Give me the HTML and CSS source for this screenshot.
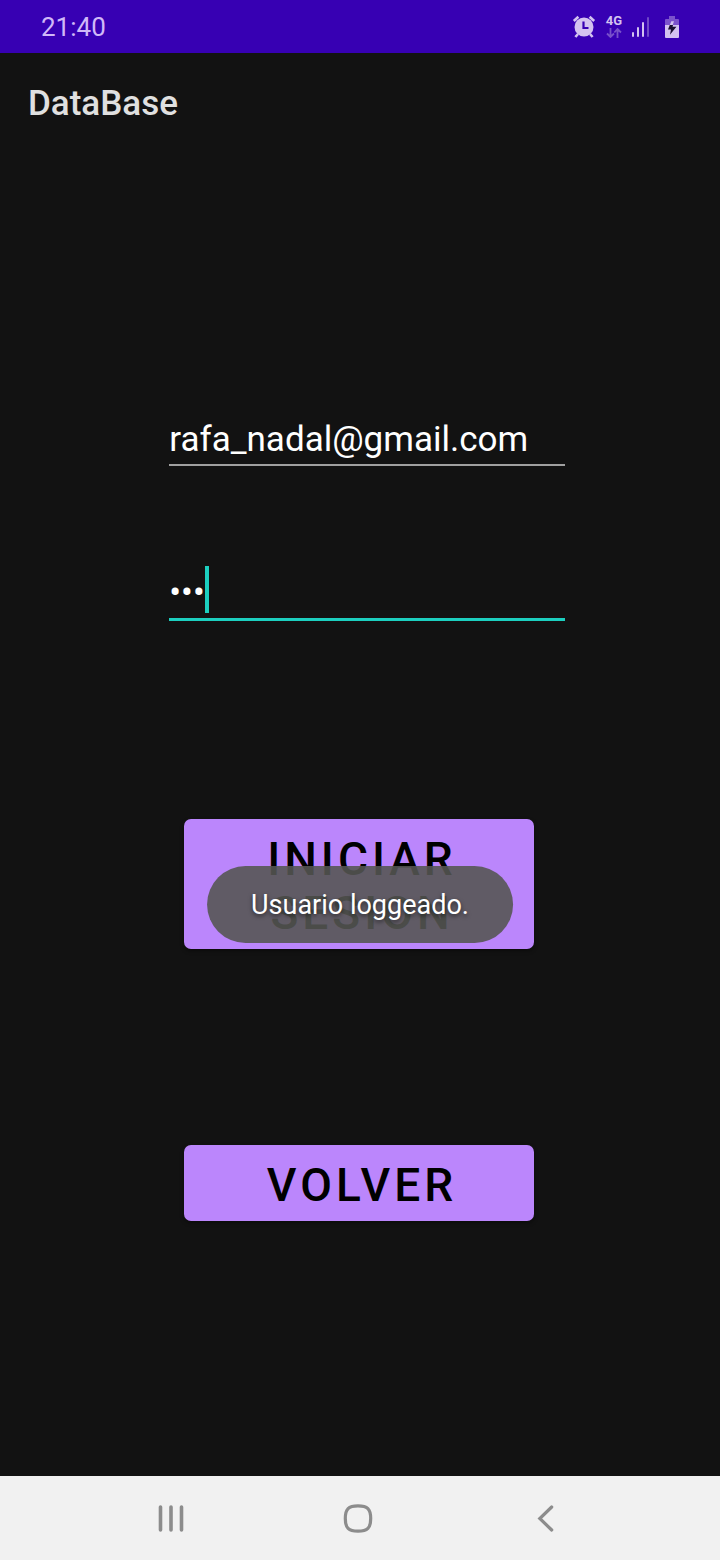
FILE: index.html
```html
<!DOCTYPE html>
<html lang="es">
<head>
<meta charset="utf-8">
<meta name="viewport" content="width=device-width, initial-scale=1">
<title>DataBase</title>
<link rel="stylesheet" href="styles.css">
</head>
<body>
<div class="screen">
  <div class="status-bar">
    <time class="clock">21:40</time>
    <div class="status-icons">
      <svg class="icon-alarm" width="24" height="24" viewBox="0 0 24 24" aria-hidden="true">
        <circle cx="12" cy="12" r="9.5" fill="#d3c2f0"/>
        <path d="M1.8 6 L6.4 1.8 M22.2 6 L17.6 1.8 M6 19 L3.4 22 M18 19 L20.6 22" stroke="#d3c2f0" stroke-width="2.6" fill="none"/>
        <path d="M11.5 6.5 V13 H16.5" stroke="#3700b3" stroke-width="2.2" fill="none"/>
      </svg>
      <div class="network">
        <span class="network-type">4G</span>
        <svg width="16" height="10" viewBox="0 0 16 10" aria-hidden="true">
          <path d="M4.5 0 V9 M1 5.5 L4.5 9 L8 5.5 M11.5 10 V1 M8.3 4.5 L11.5 1 L15 4.5" stroke="#7850ca" stroke-width="1.8" fill="none"/>
        </svg>
      </div>
      <svg class="icon-signal" width="20" height="21" viewBox="0 0 20 21" aria-hidden="true">
        <rect x="1" y="16" width="2" height="5" rx="1" fill="#d3c2f0"/>
        <rect x="6" y="11" width="2" height="10" rx="1" fill="#d3c2f0"/>
        <rect x="11" y="6" width="2" height="15" rx="1" fill="#d3c2f0"/>
        <rect x="16" y="1" width="2" height="20" rx="1" fill="#7048c8"/>
      </svg>
      <svg class="icon-battery" width="14" height="22" viewBox="0 0 14 22" aria-hidden="true">
        <path d="M4 0 H10 V3 H13 Q14 3 14 4 V9 H0 V4 Q0 3 1 3 H4 Z" fill="#7b52cc"/>
        <path d="M0 9 H14 V21 Q14 22 13 22 H1 Q0 22 0 21 Z" fill="#d3c2f0"/>
        <path d="M6.3 5.2 H9 L7.7 9 H4.8 Z" fill="#d3c2f0"/>
        <path d="M4.8 9 L3 13.4 H6 L5 18.8 L11.4 10.8 H7.6 L8 9 Z" fill="#1a1030"/>
      </svg>
    </div>
  </div>

  <header class="app-bar">
    <h1 class="app-title">DataBase</h1>
  </header>

  <main class="content">
    <form class="login">
      <div class="fields">
        <div class="field">
          <input class="input" type="email" aria-label="Email" value="rafa_nadal@gmail.com">
        </div>
        <div class="field">
          <input class="input input-active" type="password" aria-label="Contraseña" value="123">
          <span class="caret"></span>
        </div>
      </div>
      <div class="actions">
        <button class="button" type="button">INICIAR SESION</button>
        <button class="button" type="button">VOLVER</button>
      </div>
    </form>
  </main>

  <div class="toast" role="status">Usuario loggeado.</div>

  <nav class="nav-bar">
    <button class="nav-button" type="button" aria-label="Recientes">
      <svg width="30" height="30" viewBox="0 0 30 30"><path d="M4.5 4 V27 M15 4 V27 M25.5 4 V27" stroke="#8c8c8c" stroke-width="3.6" stroke-linecap="round"/></svg>
    </button>
    <button class="nav-button" type="button" aria-label="Inicio">
      <svg width="30" height="30" viewBox="0 0 30 30"><path d="M15 2.8 C24.5 2.8 27.7 6 27.7 15.5 C27.7 25 24.5 28.2 15 28.2 C5.5 28.2 2.3 25 2.3 15.5 C2.3 6 5.5 2.8 15 2.8 Z" fill="none" stroke="#8c8c8c" stroke-width="3.2"/></svg>
    </button>
    <button class="nav-button" type="button" aria-label="Atrás">
      <svg width="30" height="30" viewBox="0 0 30 30"><path d="M21.7 4 L9.8 15.5 L21.7 27" fill="none" stroke="#8c8c8c" stroke-width="3.2" stroke-linecap="round"/></svg>
    </button>
  </nav>
</div>
</body>
</html>
```

FILE: styles.css
```css
* {
  box-sizing: border-box;
}

body {
  margin: 0;
  background: #121212;
  font-family: Roboto, sans-serif;
}

.screen {
  position: relative;
  display: flex;
  flex-direction: column;
  min-height: 100vh;
}

.status-bar {
  display: flex;
  align-items: center;
  justify-content: space-between;
  height: 53px;
  padding: 0 41px;
  background: #3700b3;
  color: #d0b8f8;
}

.clock {
  font-size: 26px;
  line-height: 32px;
}

.status-icons {
  display: flex;
  align-items: center;
}

.icon-alarm {
  margin-right: 10px;
}

.network {
  display: flex;
  flex-direction: column;
  align-items: center;
  gap: 1px;
  margin-right: 9px;
}

.network-type {
  color: #d3c2f0;
  font-size: 13px;
  font-weight: 700;
  line-height: 12px;
}

.icon-signal {
  margin-right: 14px;
}

.app-bar {
  display: flex;
  align-items: center;
  height: 100px;
  padding: 2px 28px 0;
}

.app-title {
  margin: 0;
  color: #e0e0e0;
  font-size: 35px;
  font-weight: 500;
  line-height: 42px;
}

.content {
  flex: 1;
  padding-top: 260px;
}

.login {
  display: flex;
  flex-direction: column;
  gap: 198px;
}

.fields {
  display: flex;
  flex-direction: column;
  align-items: center;
  gap: 100px;
  padding-left: 14px;
}

.field {
  position: relative;
  width: 56%;
}

.input {
  display: block;
  width: 100%;
  height: 53px;
  padding: 1px 0 0;
  border: 0;
  border-bottom: 2px solid #a0a0a0;
  border-radius: 0;
  outline: 0;
  background: transparent;
  color: #fff;
  font-family: Roboto, sans-serif;
  font-size: 35px;
}

.input-active {
  height: 55px;
  border-bottom: 3px solid #1ccfbf;
}

.caret {
  position: absolute;
  top: 0;
  left: 36px;
  width: 4px;
  height: 47px;
  background: #1ccfbf;
}

.actions {
  display: flex;
  flex-direction: column;
  align-items: center;
  gap: 196px;
  padding-right: 2px;
}

.button {
  width: 350px;
  padding: 13px 62px 9px 68px;
  border: 0;
  border-radius: 7px;
  background: #bb86fc;
  box-shadow: 0 2px 4px #00000066;
  color: #000;
  font-family: Roboto, sans-serif;
  font-size: 46px;
  font-weight: 500;
  letter-spacing: 4px;
  line-height: 54px;
}

.toast {
  position: absolute;
  bottom: 617px;
  left: 50%;
  padding: 23px 44px 22px;
  border-radius: 39px;
  background: rgba(84, 85, 82, 0.89);
  color: #fff;
  font-size: 27px;
  line-height: 32px;
  text-shadow: 0 2px 4px #00000099;
  white-space: nowrap;
  transform: translateX(-50%);
}

.nav-bar {
  display: flex;
  align-items: center;
  justify-content: center;
  gap: 157px;
  height: 84px;
  padding-right: 5px;
  background: #f1f1f1;
}

.nav-button {
  display: flex;
  padding: 0;
  border: 0;
  background: transparent;
}
```
